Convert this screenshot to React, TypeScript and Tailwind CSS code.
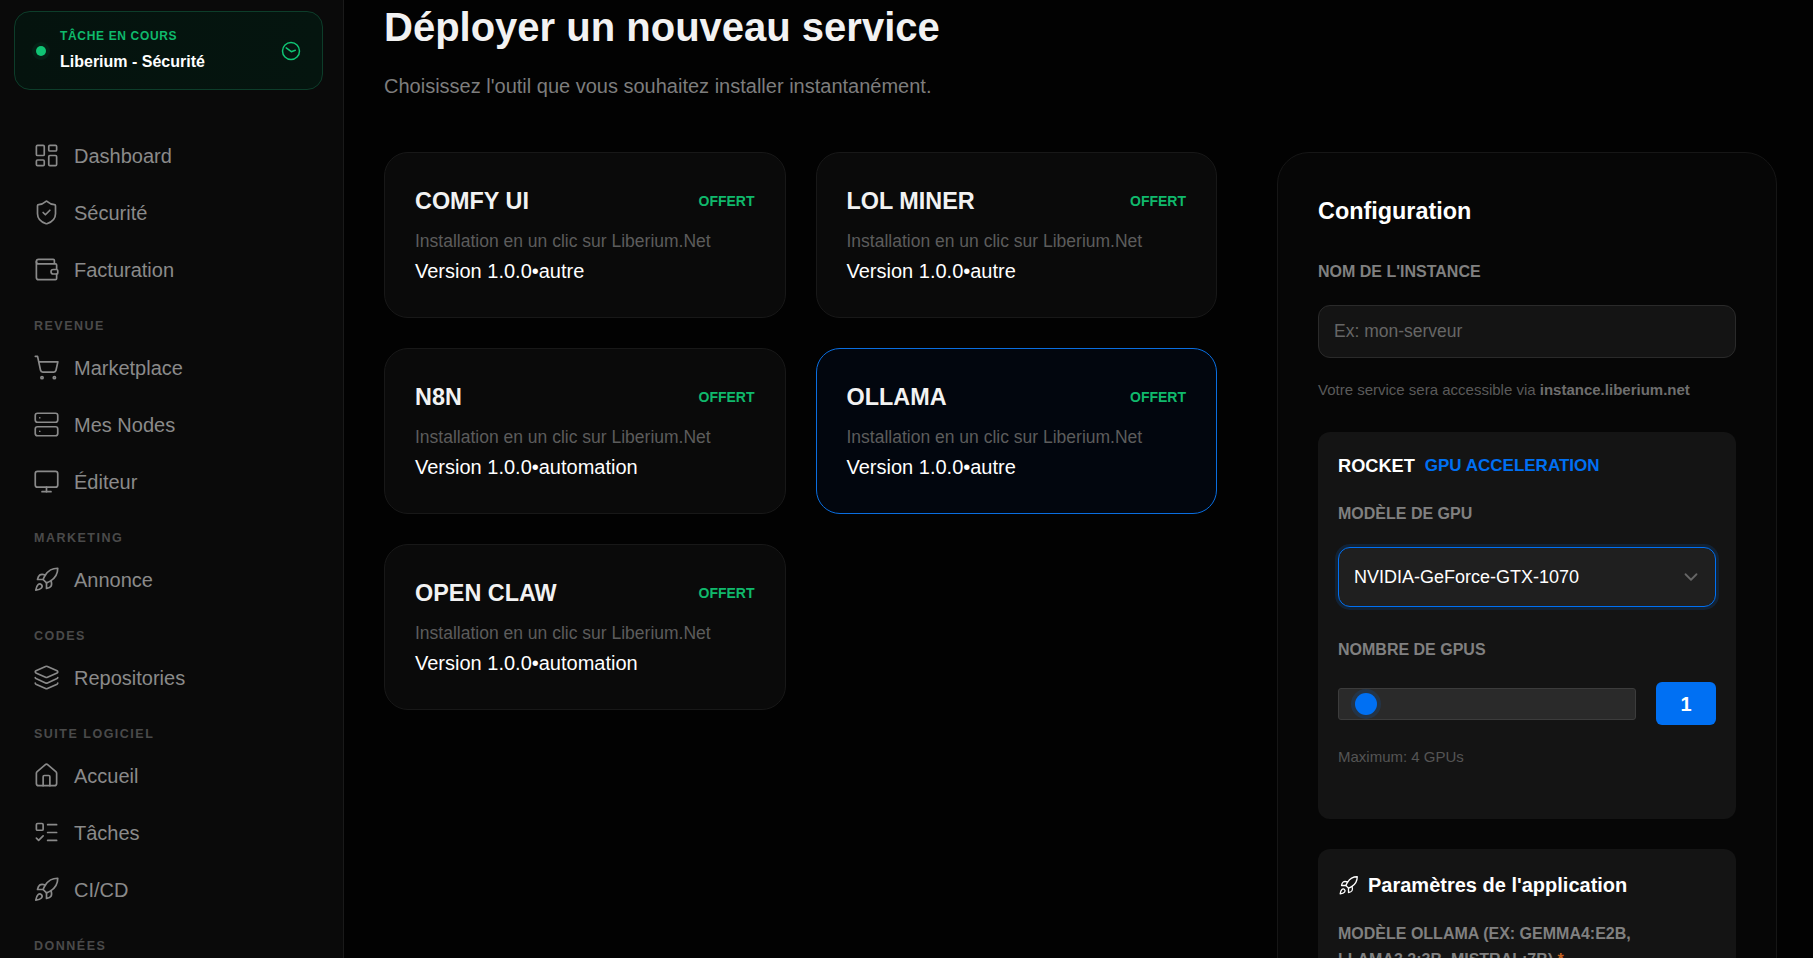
import React from 'react';
import {
  Layers,
  LayoutDashboard,
  ListTodo,
  House,
  Monitor,
  Rocket,
  Server,
  ShieldCheck,
  ShoppingCart,
  Wallet,
  ChevronDown,
} from 'lucide-react';

const NavItem = ({ icon: Icon, label }: { icon: React.ElementType; label: string }) => (
  <div className="flex h-[57px] items-center gap-[14px] pl-[33px] text-[#8a8a8a]">
    <Icon size={27} strokeWidth={1.5} />
    <span className="text-[20px]">{label}</span>
  </div>
);

const SectionLabel = ({ label }: { label: string }) => (
  <div className="flex h-[41px] items-end pb-[5px] pl-[34px] text-[12.5px] leading-[16px] font-bold tracking-[0.12em] text-[#4a4a4a]">
    {label}
  </div>
);

const Card = ({ name, tag, active }: { name: string; tag: string; active?: boolean }) => (
  <div
    className={
      active
        ? 'h-[166px] rounded-[24px] border border-[#0a6ee0] bg-[#02060e] px-[30px] pt-[32px]'
        : 'h-[166px] rounded-[24px] border border-[#181818] bg-[#0a0a0a] px-[30px] pt-[32px]'
    }
  >
    <div className="flex items-center justify-between">
      <span className="text-[23.4px] leading-[32px] font-bold text-[#f2f2f2]">{name}</span>
      <span className="text-[14px] font-bold text-[#10b96c]">OFFERT</span>
    </div>
    <p className="mt-[11px] text-[17.5px] leading-[27px] text-[#5c5c5c]">Installation en un clic sur Liberium.Net</p>
    <p className="mt-[2px] text-[20px] leading-[28px] text-white">Version 1.0.0•{tag}</p>
  </div>
);

export default function App() {
  return (
    <div className="flex h-[958px] overflow-hidden bg-[#020202] font-['Liberation_Sans',sans-serif]">
      <aside className="flex w-[344px] shrink-0 flex-col overflow-hidden border-r border-[#1a1a1a] bg-[#0a0a0a]">
        <div className="mx-[14px] mt-[11px] flex h-[79px] w-[309px] shrink-0 items-center rounded-[16px] border border-[#0d3d2a] bg-gradient-to-r from-[#05130e] to-[#05150f] pl-[21px] pr-[21px]">
          <span className="h-[10px] w-[10px] rounded-full bg-[#10c474] shadow-[0_0_0_4px_rgba(16,196,116,0.07)]" />
          <div className="ml-[14px] flex-1">
            <div className="text-[12px] leading-[15px] font-bold tracking-[0.055em] text-[#0fb96c]">TÂCHE EN COURS</div>
            <div className="mt-[8px] text-[16px] leading-[20px] font-bold text-white">Liberium - Sécurité</div>
          </div>
          <svg width="20" height="20" viewBox="0 0 20 20" fill="none" stroke="#10c474" strokeWidth="1.5" strokeLinecap="round" strokeLinejoin="round">
            <circle cx="10" cy="10" r="8.5" />
            <path d="M5.2 6.9 10.3 10.7 14.3 9.3" />
          </svg>
        </div>
        <nav className="mt-[37px]">
          <NavItem icon={LayoutDashboard} label="Dashboard" />
          <NavItem icon={ShieldCheck} label="Sécurité" />
          <NavItem icon={Wallet} label="Facturation" />
          <SectionLabel label="REVENUE" />
          <NavItem icon={ShoppingCart} label="Marketplace" />
          <NavItem icon={Server} label="Mes Nodes" />
          <NavItem icon={Monitor} label="Éditeur" />
          <SectionLabel label="MARKETING" />
          <NavItem icon={Rocket} label="Annonce" />
          <SectionLabel label="CODES" />
          <NavItem icon={Layers} label="Repositories" />
          <SectionLabel label="SUITE LOGICIEL" />
          <NavItem icon={House} label="Accueil" />
          <NavItem icon={ListTodo} label="Tâches" />
          <NavItem icon={Rocket} label="CI/CD" />
          <SectionLabel label="DONNÉES" />
        </nav>
      </aside>

      <main className="flex-1 overflow-hidden pl-[40px] pr-[36px]">
        <h1 className="pt-[4px] text-[40px] leading-[46px] font-bold text-[#f2f2f2]">Déployer un nouveau service</h1>
        <p className="mt-[21px] text-[20px] leading-[30px] text-[#7d7d7d]">
          Choisissez l'outil que vous souhaitez installer instantanément.
        </p>

        <div className="mt-[51px] flex gap-[60px]">
          <div className="grid h-fit w-[833px] shrink-0 grid-cols-2 gap-[30px]">
            <Card name="COMFY UI" tag="autre" />
            <Card name="LOL MINER" tag="autre" />
            <Card name="N8N" tag="automation" />
            <Card name="OLLAMA" tag="autre" active />
            <Card name="OPEN CLAW" tag="automation" />
          </div>

          <section className="h-[900px] flex-1 rounded-[32px] border border-[#161616] bg-[#060606] px-[40px] pt-[42px]">
            <h2 className="text-[23.4px] leading-[32px] font-bold text-white">Configuration</h2>
            <label className="mt-[33px] block text-[16px] leading-[24px] font-bold text-[#808080]">NOM DE L'INSTANCE</label>
            <input
              placeholder="Ex: mon-serveur"
              className="mt-[21px] h-[53px] w-full rounded-[12px] border border-[#2a2a2a] bg-[#141414] px-[15px] text-[17.5px] outline-none placeholder:text-[#666666]"
            />
            <p className="mt-[22px] text-[15px] leading-[20px] text-[#5a5a5a]">
              Votre service sera accessible via <strong className="font-bold text-[#6e6e6e]">instance.liberium.net</strong>
            </p>

            <div className="mt-[32px] h-[387px] rounded-[12px] bg-[#141414] px-[20px] pt-[23px]">
              <div className="flex items-center gap-[10px] leading-[22px] font-bold">
                <span className="text-[18.2px] text-white">ROCKET</span>
                <span className="text-[17px] text-[#0070f3]">GPU ACCELERATION</span>
              </div>
              <label className="mt-[25px] block text-[16px] leading-[24px] font-bold text-[#808080]">MODÈLE DE GPU</label>
              <div className="mt-[21px] flex h-[60px] items-center justify-between rounded-[12px] border border-[#0070f3] bg-[#1f1f1f] pl-[15px] pr-[13px] shadow-[0_0_0_3px_rgba(0,112,243,0.15)]">
                <span className="text-[18px] text-white">NVIDIA-GeForce-GTX-1070</span>
                <ChevronDown size={22} strokeWidth={2} className="text-[#666666]" />
              </div>
              <label className="mt-[31px] block text-[16px] leading-[24px] font-bold text-[#808080]">NOMBRE DE GPUS</label>
              <div className="mt-[20px] flex items-center gap-[20px]">
                <div className="relative h-[32px] flex-1 rounded-[3px] border border-[#3c3c3c] bg-[#2a2a2a]">
                  <span className="absolute left-[16px] top-[4px] h-[22px] w-[22px] rounded-full bg-[#0070f3] shadow-[0_0_0_4px_rgba(0,112,243,0.15)]" />
                </div>
                <div className="flex h-[43px] w-[60px] items-center justify-center rounded-[6px] bg-[#0070f3] text-[20px] font-bold text-white">1</div>
              </div>
              <p className="mt-[22px] text-[15px] leading-[20px] text-[#555555]">Maximum: 4 GPUs</p>
            </div>

            <div className="mt-[30px] rounded-[12px] bg-[#141414] px-[20px] pt-[22px]">
              <div className="flex items-center gap-[9px]">
                <Rocket size={21} strokeWidth={1.5} className="text-white" />
                <h3 className="text-[20px] leading-[28px] font-bold text-white">Paramètres de l'application</h3>
              </div>
              <label className="mt-[22px] block text-[16px] leading-[26px] font-bold text-[#808080]">
                MODÈLE OLLAMA (EX: GEMMA4:E2B, LLAMA3.2:3B, MISTRAL:7B) <span className="text-[#c2611f]">*</span>
              </label>
            </div>
          </section>
        </div>
      </main>
    </div>
  );
}
